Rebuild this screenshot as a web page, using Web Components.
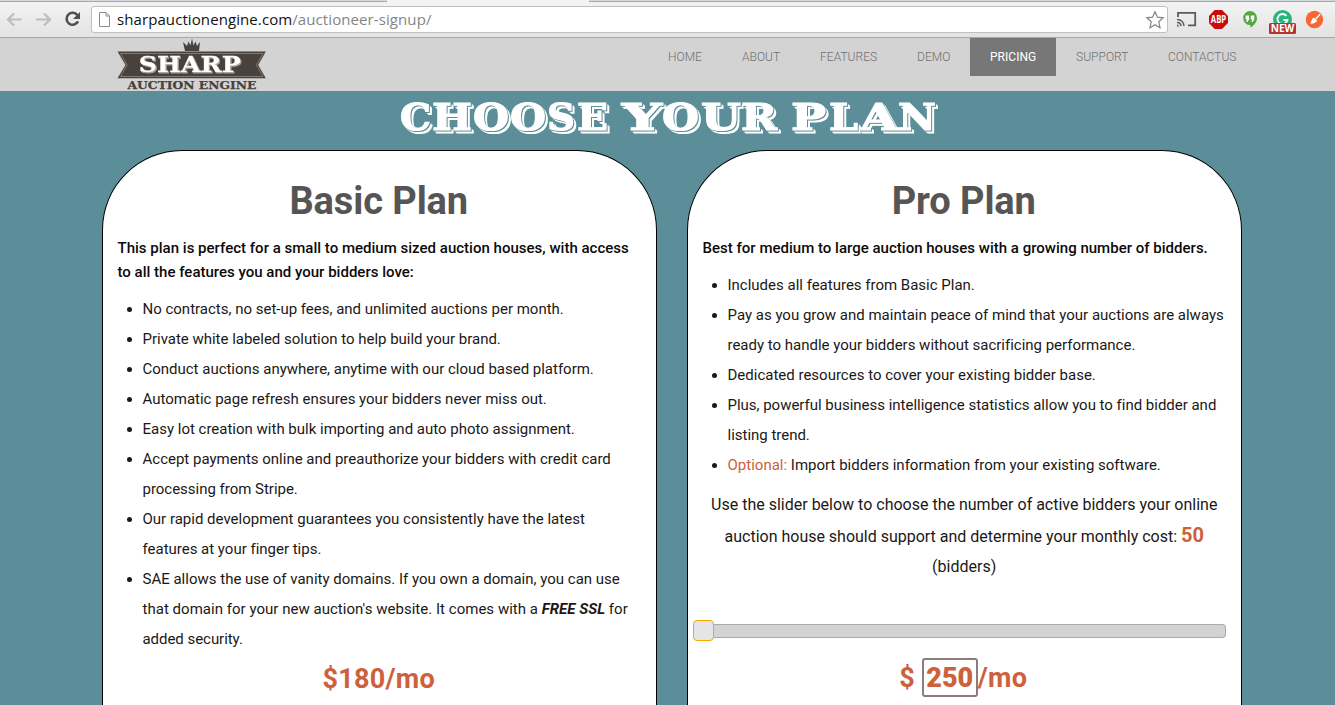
<!DOCTYPE html>
<html lang="en"><head><meta charset="utf-8"><title>Auctioneer Signup</title>
<style>html,body{margin:0;height:705px;overflow:hidden}body{background:#5b8e98;font-family:Roboto,"Liberation Sans",sans-serif;color:#1c1817}</style></head>
<body><auction-page></auction-page>
<script>
const define=(name,html)=>customElements.define(name,class extends HTMLElement{constructor(){super();this.attachShadow({mode:'open'}).innerHTML=html;}});

define('browser-bar',`<style>
:host{display:block;height:38px;box-sizing:border-box;background:linear-gradient(#f4f4f4,#e3e3e3);border-bottom:1px solid #a6a8a6;font-family:"Open Sans",sans-serif;overflow:hidden}
.tabs{height:2px;display:flex;border-bottom:1px solid #a5a8aa;background:#d5dade;box-sizing:border-box}
.tabs i{width:387px}.tabs b{width:202px;background:#f4f4f4;height:2px}
.row{display:flex;height:35px;align-items:center}
.nav{width:91px;height:35px;flex:none}.box{box-sizing:border-box;width:1077px;height:27px;border:1px solid #bfbfbf;border-radius:3px;background:#fff;display:flex;align-items:center;flex:none}
.doc{margin-left:6px;flex:none}.url{font-size:15px;line-height:22px;margin:-2px 0 0 6px;letter-spacing:.09px;white-space:nowrap;color:#111;flex:1}.url span{color:#858585}
.star{margin-right:2px}.ext{flex:none}
</style><div class="tabs"><i></i><b></b></div><div class="row">
<svg class="nav" viewBox="0 2 91 35" fill="none"><path d="M21.5 19.5H8.5M14 13.5L8 19.5L14 25.5M36 19.5H49M44 13.5L50 19.5L44 25.5" stroke="#bebebe" stroke-width="2.2"/><path d="M77.4 15.2A6 6 0 1 0 78 21.4" stroke="#505050" stroke-width="2.6"/><path d="M80 12V19H73Z" fill="#505050"/></svg>
<div class="box"><svg class="doc" width="13" height="17" viewBox="0 0 13 17" fill="#fff" stroke="#8c8c8c"><path d="M1.5 1.5H8L11.5 5V15.5H1.5ZM8 1.5V5H11.5"/></svg><div class="url">sharpauctionengine.com<span>/auctioneer-signup/</span></div>
<svg class="star" width="20" height="20" viewBox="0 0 20 20" fill="#fff" stroke="#858585" stroke-width="1.2"><path d="M10 1.7L12.4 7.2L18.2 7.8L13.8 11.8L15 17.7L10 14.7L5 17.7L6.2 11.8L1.8 7.8L7.6 7.2Z"/></svg></div>
<svg class="ext" width="167" height="35" viewBox="1168 2 167 35"><g fill="none" stroke="#5c5c5c"><path d="M1178 17V12.8H1195.2V25.3H1188" stroke-width="1.8"/><path d="M1177 19.5A6.5 6.5 0 0 1 1184 26M1177 22.5A3.5 3.5 0 0 1 1181 26" stroke-width="1.5"/></g><path d="M1177 24L1179.5 26.4H1177Z" fill="#5c5c5c"/>
<path d="M1214.6 10H1222L1228 16V23L1222 29H1214.6L1209 23V16Z" fill="#c80c0c"/><text x="1210.8" y="23.4" textLength="15.4" lengthAdjust="spacingAndGlyphs" font-family="Open Sans" font-weight="700" font-size="10" fill="#fff">ABP</text>
<path d="M1250 11a7 7 0 0 1 7 7c0 5-4 8-6.6 9.8V25.1a7 7 0 0 1-.4-14.1Z" fill="#53a842"/><path d="M1245.6 15.5h3.5v4l-1.7 2.4h-1.2l.8-2.4h-1.4ZM1250.8 15.5h3.5v4l-1.7 2.4h-1.2l.8-2.4h-1.4Z" fill="#fff"/>
<circle cx="1282.5" cy="19.5" r="9.5" fill="#27b47d"/><path d="M1286.5 16A5 5 0 1 0 1287.4 20H1283.5" fill="none" stroke="#fff" stroke-width="1.8"/><rect x="1269" y="23" width="27" height="11" rx="1.5" fill="#b13431"/><text x="1270.7" y="32.3" textLength="23.7" lengthAdjust="spacingAndGlyphs" font-family="Open Sans" font-weight="700" font-size="10.5" fill="#fff">NEW</text>
<circle cx="1314.5" cy="19.5" r="8.7" fill="#fb6635"/><path d="M1320.3 14L1315.9 18.8" stroke="#fff" stroke-width="1.4"/><path d="M1314.2 17.6L1317.2 20.6C1316 23 1313 24.3 1310 23.6C1311.6 22.3 1311.2 18.8 1314.2 17.6Z" fill="#fff"/></svg></div>`);

define('auction-logo',`<style>:host{display:block;width:150px;height:53px}svg{display:block}text{font-family:"DejaVu Serif",serif;font-weight:700}.name{filter:drop-shadow(.8px .8px 0 #49413b) drop-shadow(1.2px 1.5px 0 #a89f9a)}</style>
<svg width="150" height="53" viewBox="117 38 150 53"><path d="M185 51L183 42L187 46L188.5 41.5L190.5 45.5L192 38.3L193.4 45.5L195.5 41.5L197 46L200 42L199 51Z" fill="#49413b"/><path d="M117.5 51.5H265.8L258.2 65L265.8 78.3H117.5L125.5 65Z" fill="#49413b"/><path d="M120.5 53.5H263L256.5 65L263 76.5H120.5L127 65Z" fill="none" stroke="#8e8985" stroke-width=".8"/>
<text class="name" x="138.7" y="72" font-size="22" textLength="102" fill="#fff" stroke="#fff" stroke-width=".3" lengthAdjust="spacingAndGlyphs">SHARP</text>
<text x="127.5" y="88.8" font-size="11.5" textLength="129" lengthAdjust="spacingAndGlyphs" fill="#49413b" stroke="#49413b" stroke-width=".25">AUCTION ENGINE</text></svg>`);

define('nav-item',`<style>:host{display:block;box-sizing:border-box;height:38px;padding:0 20px;width:var(--w);font-size:12px;line-height:38px;color:#707070;font-weight:300;letter-spacing:.03px;white-space:nowrap}:host([active]){background:#777;color:#fff;font-weight:400}</style><slot></slot>`);
define('site-header',`<style>:host{display:flex;height:53px;background:#d3d3d3;padding-left:117px}nav{display:flex;margin-left:381px}</style>
<auction-logo></auction-logo><nav><nav-item style="--w:74px">HOME</nav-item><nav-item style="--w:78px">ABOUT</nav-item><nav-item style="--w:97px">FEATURES</nav-item><nav-item style="--w:73px">DEMO</nav-item><nav-item active style="--w:86px">PRICING</nav-item><nav-item style="--w:92px">SUPPORT</nav-item><nav-item style="--w:109px">CONTACTUS</nav-item></nav>`);

define('page-title',`<style>:host{display:flex;height:59px;padding-left:400px;box-sizing:border-box;font:700 37px/53px "DejaVu Serif",serif}svg{display:block;overflow:visible;filter:drop-shadow(1.5px 1.5px 0 #5b8e98) drop-shadow(2px 2px 0 #fff)}text{fill:#fff;stroke:#fff;stroke-width:1.2}</style><svg width="540" height="59" viewBox="400 91 540 59"></svg>`);

define('price-line',`<style>:host{display:flex;justify-content:center;align-items:center;height:40px;color:#cd613c;font-size:27px;font-weight:700;white-space:nowrap}::slotted(b){box-sizing:border-box;width:56px;height:39px;border:2px solid #8b7d79;border-radius:3px;display:block;text-align:center;line-height:37px;margin-left:7px}::slotted(.unit),::slotted(.currency){padding-top:1px}::slotted(.unit){letter-spacing:.3px}</style><slot></slot>`);
define('bidder-slider',`<style>:host{display:flex;align-items:center;height:22px;margin-left:-9.5px;width:533px}.thumb{box-sizing:border-box;width:21px;height:21px;border:1px solid #ffa500;border-radius:4px;background:#e5e5e5;flex:none;z-index:1}.track{box-sizing:border-box;height:14px;flex:1;border:1px solid #aaa;border-left:0;border-radius:0 4px 4px 0;background:#d3d3d3;margin-top:1px}</style><div class="thumb"></div><div class="track"></div>`);
define('plan-card',`<style>:host{display:block;box-sizing:border-box;width:555px;height:555px;border:1px solid #000;border-bottom:0;border-radius:80px 80px 0 0;background:#fff;padding:25px 0 0 14.5px}
h1{font-size:38px;line-height:50px;color:#555;margin:0 16px 0 0;text-align:center;font-weight:700;letter-spacing:-.1px}</style><h1><slot name="title"></slot></h1><slot></slot>`);

define('auction-page',`<style>:host{display:block}.plans{display:flex;gap:30px;padding-left:102px}
.intro{font-size:15px;line-height:24px;font-weight:500;color:#0c0a0a;margin:10px 0 10px;white-space:nowrap}
ul{list-style:disc;margin:0;padding-left:25px;font-size:15px;line-height:30px}li{white-space:nowrap}
.free{font-weight:700;font-style:italic}.orange{color:#cd613c}.help{font-size:16px;line-height:30px;text-align:center;margin:10px 15px 0 0;white-space:nowrap}.help strong{font-size:20px;font-weight:700;line-height:30px;color:#cd613c}
.left{margin:5px 16px 0 0}.right{margin:16px 17px 0 0}bidder-slider{margin-top:37px}
</style><browser-bar></browser-bar><site-header></site-header><page-title></page-title><div class="plans">
<plan-card><span slot="title">Basic Plan</span><p class="intro"><span data-w="511">This plan is perfect for a small to medium sized auction houses, with access</span><br><span data-w="296">to all the features you and your bidders love:</span></p>
<ul><li><span data-w="421">No contracts, no set-up fees, and unlimited auctions per month.</span></li><li><span data-w="358">Private white labeled solution to help build your brand.</span></li><li><span data-w="451">Conduct auctions anywhere, anytime with our cloud based platform.</span></li><li><span data-w="404">Automatic page refresh ensures your bidders never miss out.</span></li><li><span data-w="432">Easy lot creation with bulk importing and auto photo assignment.</span></li><li><span data-w="468">Accept payments online and preauthorize your bidders with credit card</span><br><span data-w="155">processing from Stripe.</span></li><li><span data-w="442">Our rapid development guarantees you consistently have the latest</span><br><span data-w="178">features at your finger tips.</span></li><li><span data-w="477">SAE allows the use of vanity domains. If you own a domain, you can use</span><br><span data-w="485">that domain for your new auction's website. It comes with a <span class="free">FREE SSL</span> for</span><br><span data-w="100">added security.</span></li></ul>
<price-line class="left"><span data-w="112">$180/mo</span></price-line></plan-card>
<plan-card><span slot="title">Pro Plan</span><p class="intro"><span data-w="505">Best for medium to large auction houses with a growing number of bidders.</span></p>
<ul><li><span data-w="247">Includes all features from Basic Plan.</span></li><li><span data-w="496">Pay as you grow and maintain peace of mind that your auctions are always</span><br><span data-w="407">ready to handle your bidders without sacrificing performance.</span></li><li><span data-w="368">Dedicated resources to cover your existing bidder base.</span></li><li><span data-w="488">Plus, powerful business intelligence statistics allow you to find bidder and</span><br><span data-w="82">listing trend.</span></li><li><span data-w="433"><span class="orange">Optional:</span> Import bidders information from your existing software.</span></li></ul>
<p class="help"><span data-w="506">Use the slider below to choose the number of active bidders your online</span><br><span data-w="479">auction house should support and determine your monthly cost: <strong>50</strong></span><br><span data-w="64">(bidders)</span></p><bidder-slider></bidder-slider><price-line class="right"><span class="currency">$</span><b>250</b><span class="unit">/mo</span></price-line></plan-card></div>`);

const root=document.querySelector('auction-page').shadowRoot;
/* Each display letter has its own origin and width. */
const letters=[['C',400,31],['H',432,40],['O',473,36],['O',510,36],['S',547,28],['E',577,31],['Y',622,40],['O',662,37],['U',701,40],['R',741,36],['P',791,35],['L',829,29],['A',860,38],['N',898,38]];
const title=root.querySelector('page-title').shadowRoot.querySelector('svg');
for(const [c,x,w] of letters){const t=document.createElementNS('http://www.w3.org/2000/svg','text');t.textContent=c;title.append(t);const nat=t.getComputedTextLength();t.setAttribute('transform',`translate(${x} 130) scale(${w/nat} 1)`);}
for(const el of root.querySelectorAll('[data-w]')){const n=el.textContent.length,w=el.getBoundingClientRect().width;el.style.letterSpacing=((+el.dataset.w+.3-w)/n)+'px';}
</script></body></html>
